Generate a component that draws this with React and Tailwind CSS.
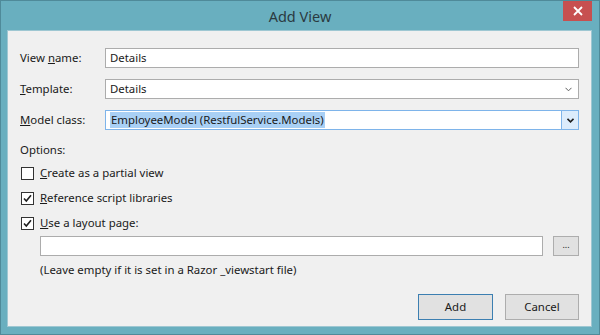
import React from 'react'

const font = { fontFamily: '"Noto Sans", "Open Sans", sans-serif' }

function Chevron({ bold }) {
  return (
    <svg width="7" height="5" viewBox="0 0 7 5">
      <path
        d="M0.5 0.8 L3.5 3.8 L6.5 0.8"
        fill="none"
        stroke={bold ? '#1e1e1e' : '#606060'}
        strokeWidth={bold ? 1.6 : 1}
      />
    </svg>
  )
}

function Check() {
  return (
    <svg width="11" height="11" viewBox="0 0 11 11">
      <path d="M2 5.5 L4.3 8 L9 2.2" fill="none" stroke="#1e1e1e" strokeWidth="1.6" />
    </svg>
  )
}

function CheckRow({ checked, first, rest }) {
  return (
    <div className="flex items-center h-[16px] gap-[6px]">
      <div className="w-[13px] h-[13px] border border-[#333] bg-white flex items-center justify-center">
        {checked && <Check />}
      </div>
      <span>
        <u>{first}</u>
        {rest}
      </span>
    </div>
  )
}

export default function App() {
  return (
    <div
      className="w-[600px] h-[335px] bg-[#69afbf] border border-[#4f8a99] flex flex-col text-[11.4px] text-[#1a1a1a]"
      style={font}
    >
      <div className="h-[29px] flex items-start relative">
        <div className="flex-1 text-center text-[14.5px] text-[#2b3a3f] pt-[5px]">Add View</div>
        <div className="absolute right-[7px] top-0 w-[29px] h-[20px] bg-[#c75050] flex items-center justify-center">
          <svg width="10" height="10" viewBox="0 0 10 10">
            <path d="M1 1 L9 9 M9 1 L1 9" stroke="white" strokeWidth="1.8" />
          </svg>
        </div>
      </div>
      <div className="ml-[6px] mr-[7px] mb-[7px] flex-1 bg-[#f0f0f0] border border-[#9ec7d2] px-[12px] pt-[17px] flex flex-col">
        <div className="flex flex-col gap-[11px]">
          <div className="flex items-center h-[20px]">
            <div className="w-[85px]">
              View <u>n</u>ame:
            </div>
            <div className="flex-1 h-[20px] bg-white border border-[#acacac] px-[4px] flex items-center">Details</div>
          </div>
          <div className="flex items-center h-[20px]">
            <div className="w-[85px]">
              <u>T</u>emplate:
            </div>
            <div className="flex-1 h-[20px] bg-white border border-[#acacac] pl-[4px] pr-[6px] flex items-center justify-between">
              <span>Details</span>
              <Chevron />
            </div>
          </div>
          <div className="flex items-center h-[20px]">
            <div className="w-[85px]">
              <u>M</u>odel class:
            </div>
            <div className="flex-1 h-[20px] bg-white border border-[#7eb4ea] pl-[4px] flex items-center justify-between">
              <span className="bg-[#a9d0f5] leading-[16px] px-px">EmployeeModel (RestfulService.Models)</span>
              <div className="w-[17px] h-[18px] bg-[#dcecfc] border-l border-[#7eb4ea] flex items-center justify-center">
                <Chevron bold />
              </div>
            </div>
          </div>
        </div>
        <div className="mt-[12px] leading-[16px]">Options:</div>
        <div className="mt-[7px] flex flex-col gap-[9px] pl-[1px]">
          <CheckRow first="C" rest="reate as a partial view" />
          <CheckRow checked first="R" rest="eference script libraries" />
          <CheckRow checked first="U" rest="se a layout page:" />
        </div>
        <div className="mt-[5px] ml-[20px] flex items-center gap-[10px]">
          <div className="flex-1 h-[20px] bg-white border border-[#acacac]" />
          <div className="w-[26px] h-[20px] bg-[#e1e1e1] border border-[#adadad] flex items-center justify-center text-[9px] leading-none pb-[3px]">
            ...
          </div>
        </div>
        <div className="mt-[6px] ml-[20px] leading-[16px]">(Leave empty if it is set in a Razor _viewstart file)</div>
        <div className="mt-[16px] flex justify-end gap-[12px]">
          <div className="w-[75px] h-[26px] bg-[#e1e1e1] border border-[#3c7fb1] flex items-center justify-center">Add</div>
          <div className="w-[74px] h-[26px] bg-[#e1e1e1] border border-[#adadad] flex items-center justify-center">Cancel</div>
        </div>
      </div>
    </div>
  )
}
